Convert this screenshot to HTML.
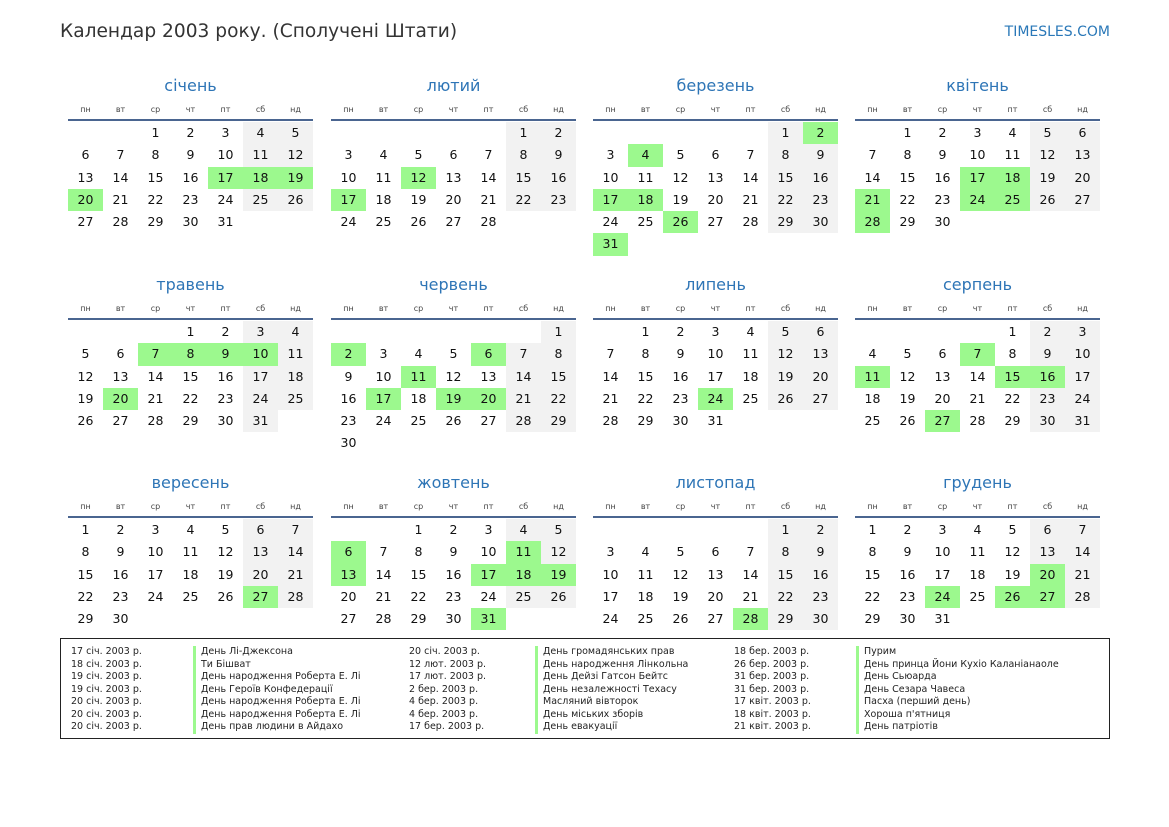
<!DOCTYPE html>
<html><head><meta charset="utf-8"><style>
body{margin:0;width:1169px;height:827px;background:#fff;font-family:"DejaVu Sans","Liberation Sans",sans-serif;color:#111;position:relative;overflow:hidden}
.t{position:absolute;left:60px;top:21px;font-size:18.6px;color:#333}
.s{position:absolute;right:59px;top:24px;font-size:14px;color:#2a78b8}
.m{position:absolute;width:245px}
.m h2{margin:0;height:30px;font-weight:normal;font-size:16px;color:#2e75b6;text-align:center;line-height:32px}
.wd{display:grid;grid-template-columns:repeat(7,35px);font-size:8px;color:#444;text-align:center;height:19px;line-height:20px}
.ln{height:2px;background:#4a6590;margin-bottom:1px}
.g{display:grid;grid-template-columns:repeat(7,35px);grid-auto-rows:22.25px;font-size:12.5px;text-align:center;line-height:22px}
.g i{font-style:normal}
.g i:nth-child(7n+6):not(:empty),.g i:nth-child(7n):not(:empty){background:#f2f2f2}
.g i.h{background:#9cf98e!important}
.lg{position:absolute;left:60px;top:638px;width:1048px;height:99px;border:1px solid #222;font-size:9.5px;color:#222}
.c{position:absolute;top:7px;line-height:12.5px;white-space:nowrap}
.b{border-left:3px solid #9cf98e;padding-left:5px}
</style></head><body>
<div class="t">Календар 2003 року. (Сполучені Штати)</div>
<div class="s">TIMESLES.COM</div>

<div class="m" style="left:68px;top:70px"><h2>січень</h2><div class="wd"><span>пн</span><span>вт</span><span>ср</span><span>чт</span><span>пт</span><span>сб</span><span>нд</span></div><div class="ln"></div><div class="g"><i></i><i></i><i>1</i><i>2</i><i>3</i><i>4</i><i>5</i><i>6</i><i>7</i><i>8</i><i>9</i><i>10</i><i>11</i><i>12</i><i>13</i><i>14</i><i>15</i><i>16</i><i class="h">17</i><i class="h">18</i><i class="h">19</i><i class="h">20</i><i>21</i><i>22</i><i>23</i><i>24</i><i>25</i><i>26</i><i>27</i><i>28</i><i>29</i><i>30</i><i>31</i></div></div>

<div class="m" style="left:331px;top:70px"><h2>лютий</h2><div class="wd"><span>пн</span><span>вт</span><span>ср</span><span>чт</span><span>пт</span><span>сб</span><span>нд</span></div><div class="ln"></div><div class="g"><i></i><i></i><i></i><i></i><i></i><i>1</i><i>2</i><i>3</i><i>4</i><i>5</i><i>6</i><i>7</i><i>8</i><i>9</i><i>10</i><i>11</i><i class="h">12</i><i>13</i><i>14</i><i>15</i><i>16</i><i class="h">17</i><i>18</i><i>19</i><i>20</i><i>21</i><i>22</i><i>23</i><i>24</i><i>25</i><i>26</i><i>27</i><i>28</i></div></div>

<div class="m" style="left:593px;top:70px"><h2>березень</h2><div class="wd"><span>пн</span><span>вт</span><span>ср</span><span>чт</span><span>пт</span><span>сб</span><span>нд</span></div><div class="ln"></div><div class="g"><i></i><i></i><i></i><i></i><i></i><i>1</i><i class="h">2</i><i>3</i><i class="h">4</i><i>5</i><i>6</i><i>7</i><i>8</i><i>9</i><i>10</i><i>11</i><i>12</i><i>13</i><i>14</i><i>15</i><i>16</i><i class="h">17</i><i class="h">18</i><i>19</i><i>20</i><i>21</i><i>22</i><i>23</i><i>24</i><i>25</i><i class="h">26</i><i>27</i><i>28</i><i>29</i><i>30</i><i class="h">31</i></div></div>

<div class="m" style="left:855px;top:70px"><h2>квітень</h2><div class="wd"><span>пн</span><span>вт</span><span>ср</span><span>чт</span><span>пт</span><span>сб</span><span>нд</span></div><div class="ln"></div><div class="g"><i></i><i>1</i><i>2</i><i>3</i><i>4</i><i>5</i><i>6</i><i>7</i><i>8</i><i>9</i><i>10</i><i>11</i><i>12</i><i>13</i><i>14</i><i>15</i><i>16</i><i class="h">17</i><i class="h">18</i><i>19</i><i>20</i><i class="h">21</i><i>22</i><i>23</i><i class="h">24</i><i class="h">25</i><i>26</i><i>27</i><i class="h">28</i><i>29</i><i>30</i></div></div>

<div class="m" style="left:68px;top:269px"><h2>травень</h2><div class="wd"><span>пн</span><span>вт</span><span>ср</span><span>чт</span><span>пт</span><span>сб</span><span>нд</span></div><div class="ln"></div><div class="g"><i></i><i></i><i></i><i>1</i><i>2</i><i>3</i><i>4</i><i>5</i><i>6</i><i class="h">7</i><i class="h">8</i><i class="h">9</i><i class="h">10</i><i>11</i><i>12</i><i>13</i><i>14</i><i>15</i><i>16</i><i>17</i><i>18</i><i>19</i><i class="h">20</i><i>21</i><i>22</i><i>23</i><i>24</i><i>25</i><i>26</i><i>27</i><i>28</i><i>29</i><i>30</i><i>31</i></div></div>

<div class="m" style="left:331px;top:269px"><h2>червень</h2><div class="wd"><span>пн</span><span>вт</span><span>ср</span><span>чт</span><span>пт</span><span>сб</span><span>нд</span></div><div class="ln"></div><div class="g"><i></i><i></i><i></i><i></i><i></i><i></i><i>1</i><i class="h">2</i><i>3</i><i>4</i><i>5</i><i class="h">6</i><i>7</i><i>8</i><i>9</i><i>10</i><i class="h">11</i><i>12</i><i>13</i><i>14</i><i>15</i><i>16</i><i class="h">17</i><i>18</i><i class="h">19</i><i class="h">20</i><i>21</i><i>22</i><i>23</i><i>24</i><i>25</i><i>26</i><i>27</i><i>28</i><i>29</i><i>30</i></div></div>

<div class="m" style="left:593px;top:269px"><h2>липень</h2><div class="wd"><span>пн</span><span>вт</span><span>ср</span><span>чт</span><span>пт</span><span>сб</span><span>нд</span></div><div class="ln"></div><div class="g"><i></i><i>1</i><i>2</i><i>3</i><i>4</i><i>5</i><i>6</i><i>7</i><i>8</i><i>9</i><i>10</i><i>11</i><i>12</i><i>13</i><i>14</i><i>15</i><i>16</i><i>17</i><i>18</i><i>19</i><i>20</i><i>21</i><i>22</i><i>23</i><i class="h">24</i><i>25</i><i>26</i><i>27</i><i>28</i><i>29</i><i>30</i><i>31</i></div></div>

<div class="m" style="left:855px;top:269px"><h2>серпень</h2><div class="wd"><span>пн</span><span>вт</span><span>ср</span><span>чт</span><span>пт</span><span>сб</span><span>нд</span></div><div class="ln"></div><div class="g"><i></i><i></i><i></i><i></i><i>1</i><i>2</i><i>3</i><i>4</i><i>5</i><i>6</i><i class="h">7</i><i>8</i><i>9</i><i>10</i><i class="h">11</i><i>12</i><i>13</i><i>14</i><i class="h">15</i><i class="h">16</i><i>17</i><i>18</i><i>19</i><i>20</i><i>21</i><i>22</i><i>23</i><i>24</i><i>25</i><i>26</i><i class="h">27</i><i>28</i><i>29</i><i>30</i><i>31</i></div></div>

<div class="m" style="left:68px;top:467px"><h2>вересень</h2><div class="wd"><span>пн</span><span>вт</span><span>ср</span><span>чт</span><span>пт</span><span>сб</span><span>нд</span></div><div class="ln"></div><div class="g"><i>1</i><i>2</i><i>3</i><i>4</i><i>5</i><i>6</i><i>7</i><i>8</i><i>9</i><i>10</i><i>11</i><i>12</i><i>13</i><i>14</i><i>15</i><i>16</i><i>17</i><i>18</i><i>19</i><i>20</i><i>21</i><i>22</i><i>23</i><i>24</i><i>25</i><i>26</i><i class="h">27</i><i>28</i><i>29</i><i>30</i></div></div>

<div class="m" style="left:331px;top:467px"><h2>жовтень</h2><div class="wd"><span>пн</span><span>вт</span><span>ср</span><span>чт</span><span>пт</span><span>сб</span><span>нд</span></div><div class="ln"></div><div class="g"><i></i><i></i><i>1</i><i>2</i><i>3</i><i>4</i><i>5</i><i class="h">6</i><i>7</i><i>8</i><i>9</i><i>10</i><i class="h">11</i><i>12</i><i class="h">13</i><i>14</i><i>15</i><i>16</i><i class="h">17</i><i class="h">18</i><i class="h">19</i><i>20</i><i>21</i><i>22</i><i>23</i><i>24</i><i>25</i><i>26</i><i>27</i><i>28</i><i>29</i><i>30</i><i class="h">31</i></div></div>

<div class="m" style="left:593px;top:467px"><h2>листопад</h2><div class="wd"><span>пн</span><span>вт</span><span>ср</span><span>чт</span><span>пт</span><span>сб</span><span>нд</span></div><div class="ln"></div><div class="g"><i></i><i></i><i></i><i></i><i></i><i>1</i><i>2</i><i>3</i><i>4</i><i>5</i><i>6</i><i>7</i><i>8</i><i>9</i><i>10</i><i>11</i><i>12</i><i>13</i><i>14</i><i>15</i><i>16</i><i>17</i><i>18</i><i>19</i><i>20</i><i>21</i><i>22</i><i>23</i><i>24</i><i>25</i><i>26</i><i>27</i><i class="h">28</i><i>29</i><i>30</i></div></div>

<div class="m" style="left:855px;top:467px"><h2>грудень</h2><div class="wd"><span>пн</span><span>вт</span><span>ср</span><span>чт</span><span>пт</span><span>сб</span><span>нд</span></div><div class="ln"></div><div class="g"><i>1</i><i>2</i><i>3</i><i>4</i><i>5</i><i>6</i><i>7</i><i>8</i><i>9</i><i>10</i><i>11</i><i>12</i><i>13</i><i>14</i><i>15</i><i>16</i><i>17</i><i>18</i><i>19</i><i class="h">20</i><i>21</i><i>22</i><i>23</i><i class="h">24</i><i>25</i><i class="h">26</i><i class="h">27</i><i>28</i><i>29</i><i>30</i><i>31</i></div></div>

<div class="lg">
<div class="c" style="left:10px">17 січ. 2003 р.<br>18 січ. 2003 р.<br>19 січ. 2003 р.<br>19 січ. 2003 р.<br>20 січ. 2003 р.<br>20 січ. 2003 р.<br>20 січ. 2003 р.</div>
<div class="c b" style="left:132px">День Лі-Джексона<br>Ти Бішват<br>День народження Роберта Е. Лі<br>День Героїв Конфедерації<br>День народження Роберта Е. Лі<br>День народження Роберта Е. Лі<br>День прав людини в Айдахо</div>
<div class="c" style="left:348px">20 січ. 2003 р.<br>12 лют. 2003 р.<br>17 лют. 2003 р.<br>2 бер. 2003 р.<br>4 бер. 2003 р.<br>4 бер. 2003 р.<br>17 бер. 2003 р.</div>
<div class="c b" style="left:474px">День громадянських прав<br>День народження Лінкольна<br>День Дейзі Гатсон Бейтс<br>День незалежності Техасу<br>Масляний вівторок<br>День міських зборів<br>День евакуації</div>
<div class="c" style="left:673px">18 бер. 2003 р.<br>26 бер. 2003 р.<br>31 бер. 2003 р.<br>31 бер. 2003 р.<br>17 квіт. 2003 р.<br>18 квіт. 2003 р.<br>21 квіт. 2003 р.</div>
<div class="c b" style="left:795px">Пурим<br>День принца Йони Кухіо Каланіанаоле<br>День Сьюарда<br>День Сезара Чавеса<br>Пасха (перший день)<br>Хороша п'ятниця<br>День патріотів</div>
</div>
</body></html>
